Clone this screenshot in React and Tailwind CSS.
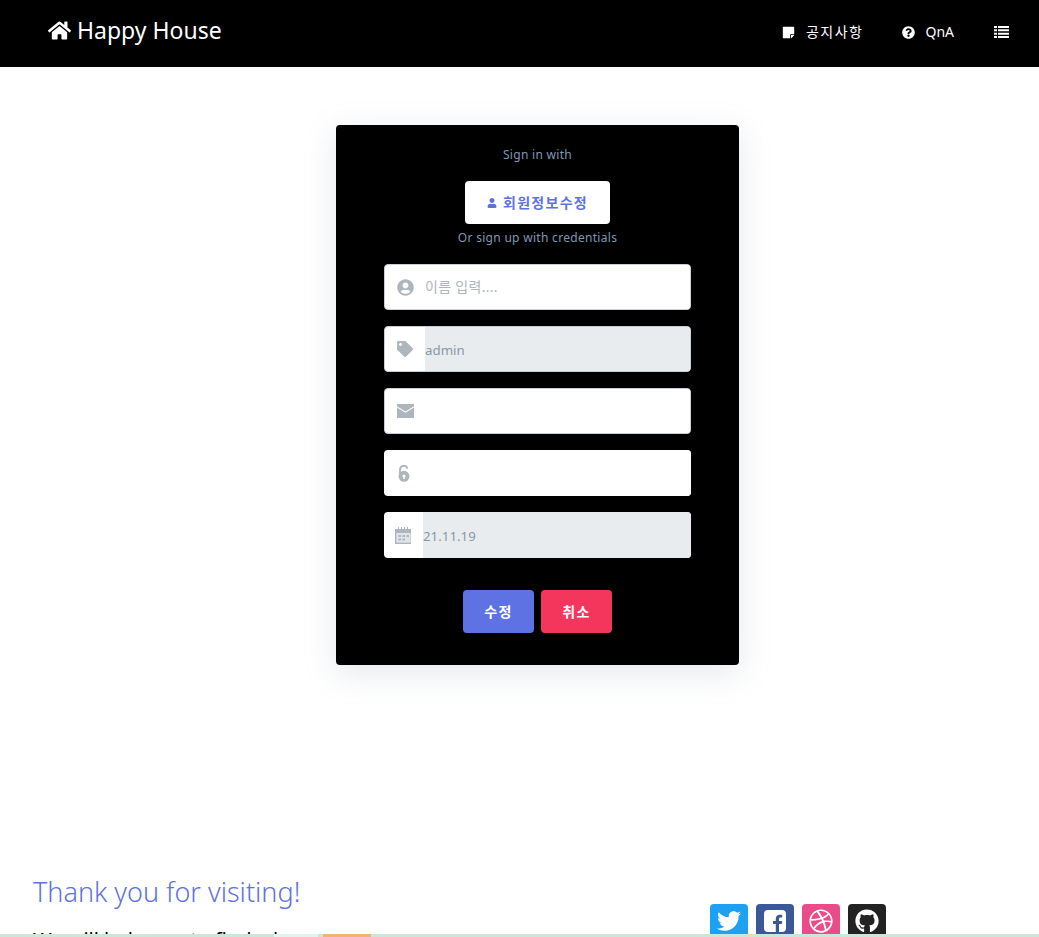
import { FaHome, FaStickyNote, FaQuestionCircle, FaUser, FaUserCircle, FaTag, FaTwitter, FaDribbble, FaGithub } from 'react-icons/fa';

const font = "font-['Noto_Sans','Noto_Sans_CJK_KR',sans-serif]";

function ListIcon() {
  return (
    <svg width="15" height="12" viewBox="0 0 15 12" fill="currentColor">
      <path d="M0 0h3v2H0zM4 0h11v2H4zM0 3.300h3v2H0zM4 3.300h11v2H4zM0 6.700h3v2H0zM4 6.700h11v2H4zM0 10h3v2H0zM4 10h11v2H4z" />
    </svg>
  );
}

function FacebookIcon() {
  return (
    <svg width="22" height="22" viewBox="0 0 22 22">
      <path fill="#fff" d="M4 0h14a4 4 0 0 1 4 4v14a4 4 0 0 1-4 4h-3v-8h2.800l.4-3H15V9c0-.9.300-1.500 1.500-1.500h1.700V4.800c-.3 0-1.300-.1-2.400-.1-2.400 0-4 1.400-4 4.100V11H9v3h2.800v8H4a4 4 0 0 1-4-4V4a4 4 0 0 1 4-4Z" />
    </svg>
  );
}

function EnvelopeIcon() {
  return (
    <svg width="17" height="14" viewBox="0 0 17 14" fill="#adb5bd">
      <path d="M0 0h17v2.200L8.500 7.400 0 2.200V0Z" />
      <path d="M0 3.600l8.500 5.200L17 3.600V14H0V3.600Z" />
    </svg>
  );
}

function UnlockIcon() {
  return (
    <svg width="12" height="17" viewBox="0 0 12 17" fill="none">
      <path d="M2 9V4.500a3.800 3.800 0 0 1 7.200-1.600" stroke="#adb5bd" strokeWidth="1.800" strokeLinecap="round" />
      <path fillRule="evenodd" clipRule="evenodd" d="M6 5.800a5.500 5.500 0 1 1 0 11 5.500 5.500 0 0 1 0-11Zm0 3.700a1.600 1.600 0 0 0-.7 3.040V14h1.400v-1.460A1.600 1.600 0 0 0 6 9.500Z" fill="#adb5bd" />
    </svg>
  );
}

function CalendarIcon() {
  return (
    <svg width="17" height="17" viewBox="0 0 17 17" fill="#adb5bd">
      <path fillRule="evenodd" d="M0 2h3V0h1v2h2V0h1v2h2V0h1v2h2V0h1v2h3v15H0V2Zm1.500 4v9.500h14V6h-14Z" />
      <rect x="1.500" y="6" width="14" height="9.500" opacity="0.35" />
      <rect x="3.500" y="8" width="2.500" height="2" />
      <rect x="7.500" y="8" width="2.500" height="2" />
      <rect x="11.500" y="8" width="2.500" height="2" />
      <rect x="3.500" y="11.500" width="2.500" height="2" />
      <rect x="7.500" y="11.500" width="2.500" height="2" />
    </svg>
  );
}

function Field({ icon, value, placeholder, disabled, narrow, bordered = true }) {
  return (
    <div className={`flex h-[46px] overflow-hidden rounded bg-white ${bordered ? 'border border-[#c9ced4]' : ''}`}>
      <div className={`flex shrink-0 items-center justify-center ${narrow ? 'w-[39px]' : 'w-[40px]'}`}>{icon}</div>
      <input
        readOnly
        value={value || ''}
        placeholder={placeholder}
        className={`min-w-0 flex-1 outline-none placeholder:text-[#adb5bd] ${disabled ? 'bg-[#e9ecef] pt-[3px] text-[13.3px] text-[#8898aa]' : 'bg-white text-sm tracking-[0.3px]'}`}
      />
    </div>
  );
}

export default function App() {
  return (
    <div className={`h-[937px] overflow-hidden bg-white ${font}`}>
      <nav className="flex h-[67px] items-center justify-between bg-black pb-[3px] pl-[48px] pr-[30px] text-white">
        <a className="mb-[3px] flex items-center gap-[6px] text-[23px] leading-none">
          <FaHome className="text-[23px]" />
          Happy House
        </a>
        <ul className="flex items-center text-sm">
          <li className="flex items-center gap-[11px] tracking-[1.5px]">
            <FaStickyNote className="text-[13px]" />
            공지사항
          </li>
          <li className="ml-[39px] flex items-center gap-[10px]">
            <FaQuestionCircle className="text-[13px]" />
            QnA
          </li>
          <li className="ml-[40px]">
            <ListIcon />
          </li>
        </ul>
      </nav>

      <main className="flex h-[800px] justify-center pl-9 pt-[58px]">
        <div className="h-[540px] w-[403px] rounded bg-black px-[48px] pt-[21px] shadow-[0_8px_32px_rgba(136,152,170,0.22)]">
          <p className="text-center text-xs leading-[18px] tracking-[0.3px] text-[#8296b4]">Sign in with</p>
          <div className="mt-[17px] flex justify-center">
            <button className="flex h-[43px] w-[145px] items-center justify-center gap-[6px] rounded bg-white text-sm font-bold tracking-[1.3px] text-[#5e72e4]">
              <FaUser className="text-[10px]" />
              회원정보수정
            </button>
          </div>
          <p className="mt-[5px] text-center text-xs leading-[18px] tracking-[0.3px] text-[#8296b4]">Or sign up with credentials</p>
          <div className="mt-[17px] flex flex-col gap-4">
            <Field icon={<FaUserCircle className="text-[17px] text-[#adb5bd]" />} placeholder="이름 입력...." />
            <Field icon={<FaTag className="text-[16px] text-[#adb5bd]" />} value="admin" disabled />
            <Field icon={<EnvelopeIcon />} />
            <Field icon={<UnlockIcon />} bordered={false} />
            <Field icon={<CalendarIcon />} value="21.11.19" disabled narrow bordered={false} />
          </div>
          <div className="mt-8 flex justify-center gap-[7px]">
            <button className="h-[43px] w-[71px] rounded bg-[#5e72e4] text-sm font-bold tracking-[1.3px] text-white">수정</button>
            <button className="h-[43px] w-[71px] rounded bg-[#f5365c] text-sm font-bold tracking-[1.3px] text-white">취소</button>
          </div>
        </div>
      </main>

      <footer className="relative flex h-[70px] overflow-hidden">
        <div className="w-[710px] pl-[33px] pt-[7px]">
          <h3 className="text-[27px] font-light leading-[36px] text-[#5e72e4]">Thank you for visiting!</h3>
          <p className="mt-[18px] text-xl leading-6 text-black">We will help you to find a house</p>
        </div>
        <div className="flex gap-2 pt-[37px]">
          <span className="flex h-[38px] w-[38px] items-start justify-center rounded bg-[#1da1f2] pt-[5px] text-white"><FaTwitter className="text-[24px]" /></span>
          <span className="flex h-[38px] w-[38px] items-start justify-center rounded bg-[#3b5998] pt-[6px]"><FacebookIcon /></span>
          <span className="flex h-[38px] w-[38px] items-start justify-center rounded bg-[#ea4c89] pt-[5px] text-white"><FaDribbble className="text-[24px]" /></span>
          <span className="flex h-[38px] w-[38px] items-start justify-center rounded bg-[#222222] pt-[5px] text-white"><FaGithub className="text-[24px]" /></span>
        </div>
        <div className="absolute inset-x-0 bottom-0 flex h-[3px] bg-[#c9e8da]">
          <span className="w-[274px]" />
          <span className="w-[44px] bg-[#e5f3ee]" />
          <span className="w-[5px]" />
          <span className="w-[48px] bg-[#f0b37a]" />
        </div>
      </footer>
    </div>
  );
}
